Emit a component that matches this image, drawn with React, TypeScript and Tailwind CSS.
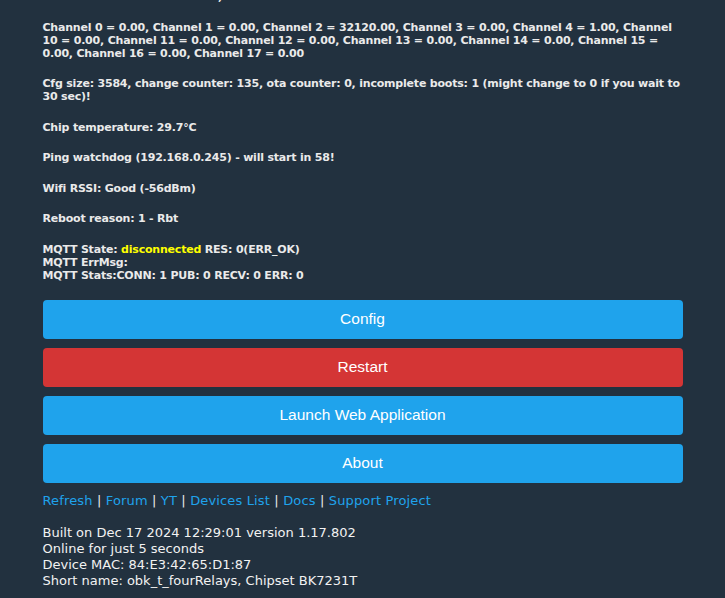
const infoFont = "font-['Verdana','DejaVu_Sans',sans-serif]";

function Info({ children }: { children: React.ReactNode }) {
  return (
    <p className="mb-[17.5px] text-[11px] leading-[13px] font-bold tracking-[-0.2px] text-[#eaeaea]">
      {children}
    </p>
  );
}

function Btn({ label, red = false }: { label: string; red?: boolean }) {
  return (
    <button
      className={`mb-[9px] flex h-[39px] w-full items-center justify-center rounded-[4px] font-['Liberation_Sans',sans-serif] text-[15.5px] text-white ${
        red ? "bg-[#d43535]" : "bg-[#1fa3ec]"
      }`}
    >
      {label}
    </button>
  );
}

const links = ["Refresh", "Forum", "YT", "Devices List", "Docs", "Support Project"];

export default function App() {
  return (
    <div className={`h-[598px] overflow-hidden bg-[#22313f] ${infoFont}`}>
      <div className="mx-auto -mt-[10px] w-[640px]">
        <Info>Total: 0.0000000000000 kWh, ON</Info>
        <Info>
          Channel 0 = 0.00, Channel 1 = 0.00, Channel 2 = 32120.00, Channel 3 = 0.00, Channel 4 = 1.00, Channel
          10 = 0.00, Channel 11 = 0.00, Channel 12 = 0.00, Channel 13 = 0.00, Channel 14 = 0.00, Channel 15 =
          0.00, Channel 16 = 0.00, Channel 17 = 0.00
        </Info>
        <Info>
          Cfg size: 3584, change counter: 135, ota counter: 0, incomplete boots: 1 (might change to 0 if you wait to
          30 sec)!
        </Info>
        <Info>Chip temperature: 29.7°C</Info>
        <Info>Ping watchdog (192.168.0.245) - will start in 58!</Info>
        <Info>Wifi RSSI: Good (-56dBm)</Info>
        <Info>Reboot reason: 1 - Rbt</Info>
        <p className="mb-[18px] text-[11px] leading-[13px] font-bold tracking-[-0.2px] text-[#eaeaea]">
          MQTT State: <span className="text-[#ffff00]">disconnected</span> RES: 0(ERR_OK)
          <br />
          MQTT ErrMsg:
          <br />
          MQTT Stats:CONN: 1 PUB: 0 RECV: 0 ERR: 0
        </p>

        <Btn label="Config" />
        <Btn label="Restart" red />
        <Btn label="Launch Web Application" />
        <Btn label="About" />

        <div className="mt-[10px] text-[13px] leading-[16px] tracking-[0.15px] text-[#eaeaea]">
          {links.map((l, i) => (
            <span key={l}>
              {i > 0 && " | "}
              <a className="text-[#1fa3ec]">{l}</a>
            </span>
          ))}
        </div>

        <div className="mt-[16px] text-[13px] leading-[16px] text-[#f2f2f2]">
          Built on Dec 17 2024 12:29:01 version 1.17.802
          <br />
          Online for just 5 seconds
          <br />
          Device MAC: 84:E3:42:65:D1:87
          <br />
          Short name: obk_t_fourRelays, Chipset BK7231T
        </div>
      </div>
    </div>
  );
}
